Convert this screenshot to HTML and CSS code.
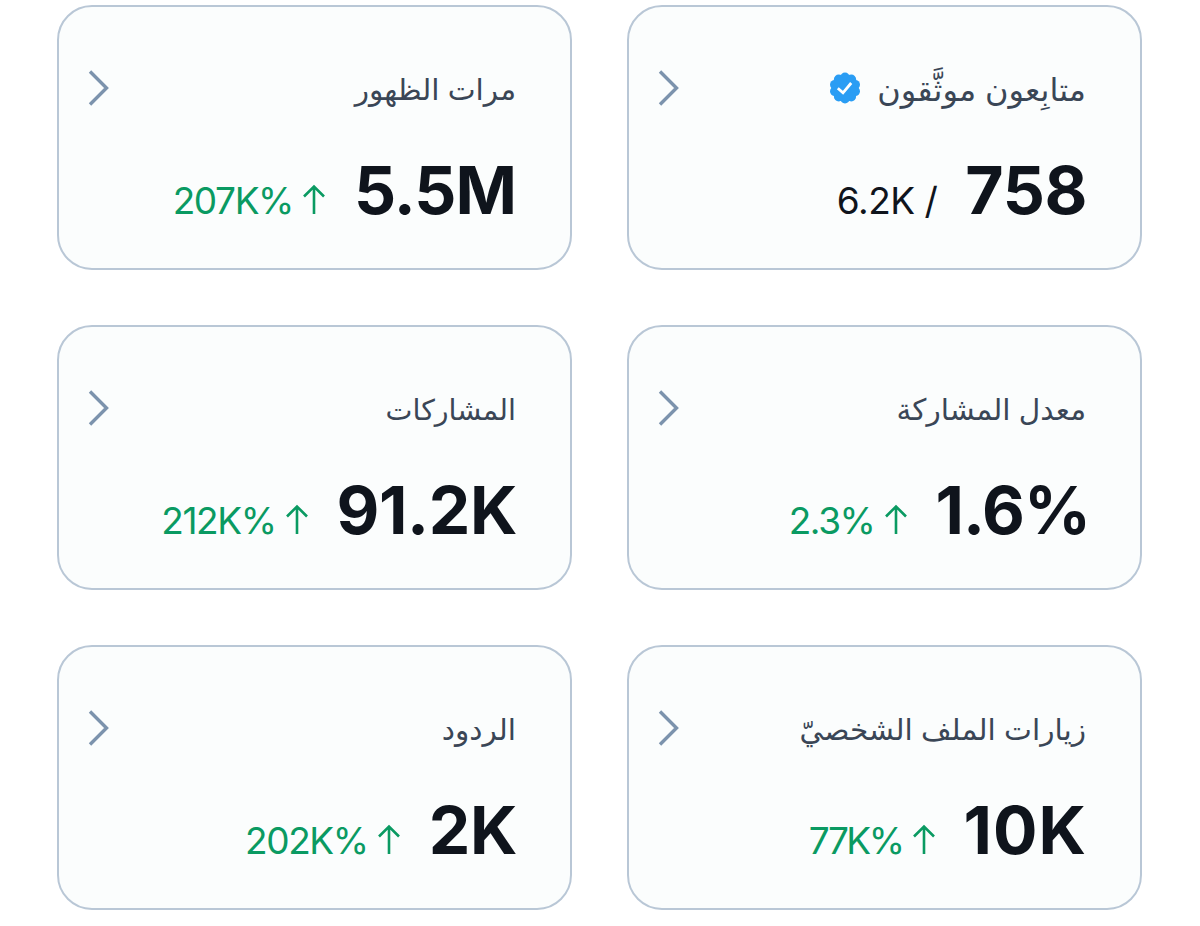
FILE: index.html
```html
<!DOCTYPE html>
<html lang="ar" dir="rtl">
<head>
    <meta charset="UTF-8">
    <title>الإحصاءات</title>
    <link rel="stylesheet" href="styles.css">
</head>
<body>

<!-- Shared icons -->
<svg class="icons" width="0" height="0">
    <symbol id="chevron" viewBox="0 0 22 36">
        <path d="M2 1.500 L18.500 18 L2 34.500" fill="none" stroke="currentColor" stroke-width="3.400"/>
    </symbol>
    <symbol id="arrow-up" viewBox="0 0 22 30">
        <path d="M11 30 V3 M1 12.500 L11 2.500 L21 12.500" fill="none" stroke="currentColor" stroke-width="2.600"/>
    </symbol>
</svg>

<div class="cards">

    <div class="card">
        <div class="card-top">
            <span class="label label-verified">متابِعون موثَّقون</span>
            <svg class="badge" viewBox="0 0 32 32">
                <g fill="#2a9df4">
                    <circle cx="16" cy="16" r="13.500"/>
                    <circle cx="16" cy="5.300" r="4.800"/>
                    <circle cx="22.300" cy="7.300" r="4.800"/>
                    <circle cx="26.200" cy="12.700" r="4.800"/>
                    <circle cx="26.200" cy="19.300" r="4.800"/>
                    <circle cx="22.300" cy="24.700" r="4.800"/>
                    <circle cx="16" cy="26.700" r="4.800"/>
                    <circle cx="9.700" cy="24.700" r="4.800"/>
                    <circle cx="5.800" cy="19.300" r="4.800"/>
                    <circle cx="5.800" cy="12.700" r="4.800"/>
                    <circle cx="9.700" cy="7.300" r="4.800"/>
                </g>
                <path fill="none" stroke="#fff" stroke-width="2.800" d="M8.800 16.200 L14 20.800 L22.200 11"/>
            </svg>
            <svg class="chevron"><use href="#chevron"/></svg>
        </div>
        <div class="card-bottom">
            <span class="value">758</span>
            <span class="total" dir="ltr">6.2K /</span>
        </div>
    </div>

    <div class="card">
        <div class="card-top">
            <span class="label">مرات الظهور</span>
            <svg class="chevron"><use href="#chevron"/></svg>
        </div>
        <div class="card-bottom">
            <span class="value tight">5.5M</span>
            <span class="change" dir="ltr">207K%<svg class="arrow"><use href="#arrow-up"/></svg></span>
        </div>
    </div>

    <div class="card">
        <div class="card-top">
            <span class="label">معدل المشاركة</span>
            <svg class="chevron"><use href="#chevron"/></svg>
        </div>
        <div class="card-bottom">
            <span class="value percent" dir="ltr">1.6%</span>
            <span class="change" dir="ltr">2.3%<svg class="arrow"><use href="#arrow-up"/></svg></span>
        </div>
    </div>

    <div class="card">
        <div class="card-top">
            <span class="label label-small">المشاركات</span>
            <svg class="chevron"><use href="#chevron"/></svg>
        </div>
        <div class="card-bottom">
            <span class="value">91.2K</span>
            <span class="change" dir="ltr">212K%<svg class="arrow"><use href="#arrow-up"/></svg></span>
        </div>
    </div>

    <div class="card">
        <div class="card-top">
            <span class="label">زيارات الملف الشخصيّ</span>
            <svg class="chevron"><use href="#chevron"/></svg>
        </div>
        <div class="card-bottom">
            <span class="value loose">10K</span>
            <span class="change narrow" dir="ltr">77K%<svg class="arrow"><use href="#arrow-up"/></svg></span>
        </div>
    </div>

    <div class="card">
        <div class="card-top">
            <span class="label">الردود</span>
            <svg class="chevron"><use href="#chevron"/></svg>
        </div>
        <div class="card-bottom">
            <span class="value">2K</span>
            <span class="change" dir="ltr">202K%<svg class="arrow"><use href="#arrow-up"/></svg></span>
        </div>
    </div>

</div>

</body>
</html>
```
FILE: styles.css
```css
body {
    margin: 0;
    background: #fff;
    font-family: Inter, "DejaVu Sans", sans-serif;
    color: #0f141c;
}

.icons {
    position: absolute;
}

.cards {
    display: grid;
    grid-template-columns: 515px 515px;
    gap: 55px;
    padding: 5px 58px 0 0;
    justify-content: start;
}

.card {
    box-sizing: border-box;
    height: 265px;
    padding: 53px 54px 0 29px;
    border: 2px solid #b9c7d6;
    border-radius: 35px;
    background: #fbfdfd;
}

.card-top {
    display: flex;
    align-items: center;
    height: 56px;
}

.label {
    padding-top: 2px;
    font-size: 29.6px;
    color: #3a4656;
    white-space: nowrap;
}

.label-verified {
    font-size: 32px;
}

.label-small {
    font-size: 28.6px;
}

.badge {
    width: 32px;
    height: 32px;
    margin-right: 16px;
}

.chevron {
    width: 22px;
    height: 36px;
    margin-right: auto;
    color: #7c93ad;
}

.card-bottom {
    display: flex;
    align-items: baseline;
    margin-top: 29px;
    line-height: 90px;
}

/* Main figure */
.value {
    font-size: 66px;
    font-weight: 700;
    letter-spacing: -0.4px;
    margin-right: -1px;
}

.value.tight {
    letter-spacing: -1px;
    margin-right: 0;
}

.value.loose {
    letter-spacing: 1px;
}

.value.percent {
    letter-spacing: -1px;
    margin-right: -4px;
}

/* Secondary figure, sits left of the main one */
.total, .change {
    font-size: 37px;
    font-weight: 400;
    letter-spacing: -1.4px;
    margin-right: 29px;
    white-space: nowrap;
}

.total {
    letter-spacing: -0.5px;
    margin-right: 28px;
}

.change {
    color: #0a9a62;
}

.change.narrow {
    letter-spacing: -2.5px;
}

.arrow {
    width: 22px;
    height: 30px;
    margin-left: 10px;
}
```
